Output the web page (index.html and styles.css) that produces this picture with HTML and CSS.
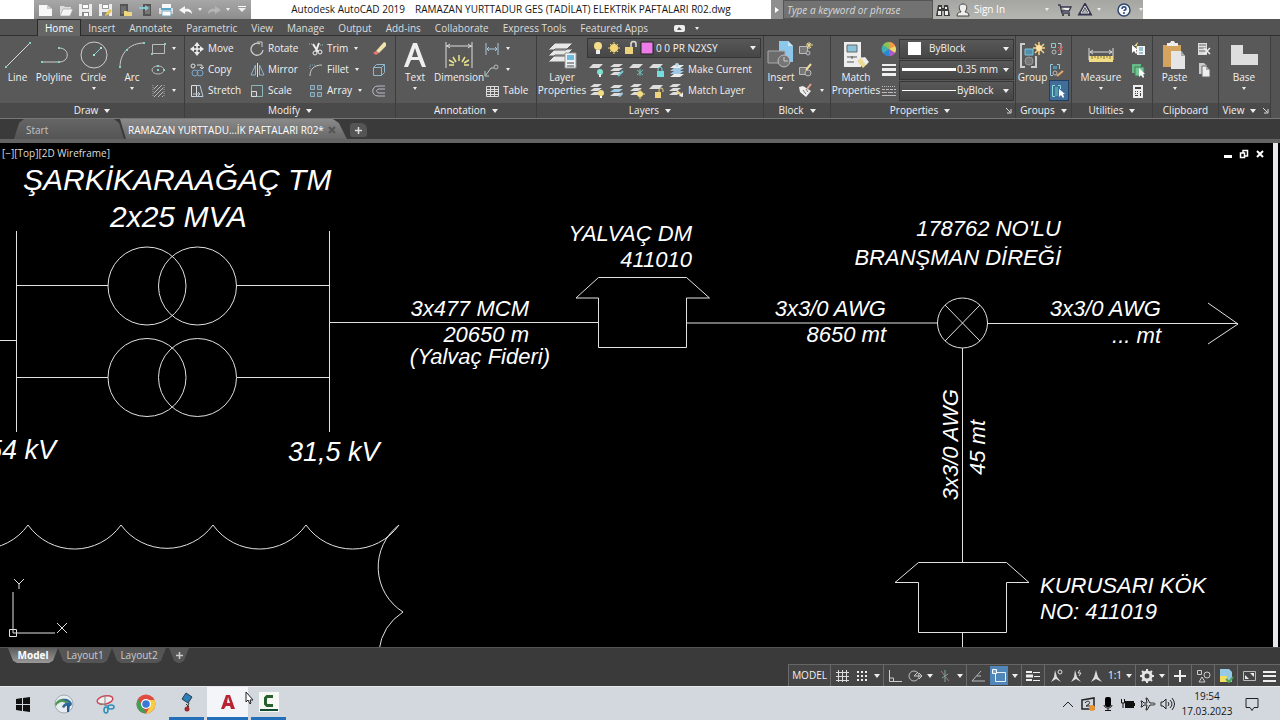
FILE: index.html
```html
<!DOCTYPE html>
<html lang="tr">
<head>
<meta charset="utf-8">
<title>Autodesk AutoCAD 2019</title>
<link rel="stylesheet" href="styles.css">
</head>
<body>
<header class="titlebar">
  <nav class="quick" aria-label="Quick access">
    <button aria-label="New"><svg width="16" height="14"><path d="M1 2h8l5 4v7H1z" fill="#f7f7f7"/><path d="M9 2v4h5" fill="#ccc"/></svg></button>
    <button aria-label="Open"><svg width="16" height="14"><path d="M2 13V3h4l1 1h6v3" fill="#ddd"/><path d="M2 13l3-7h10l-3 7z" fill="#f4f4f4" stroke="#999" stroke-width=".6"/></svg></button>
    <button aria-label="Save"><svg width="16" height="14"><path d="M1 1h13v12H1z" fill="#ececec"/><path d="M4 1h7v5H4z" fill="#999"/><path d="M5 2h5v3H5z" fill="#fff"/><path d="M4 9h7v4H4z" fill="#888"/><path d="M6 10h4v3H6z" fill="#fff"/></svg></button>
    <button aria-label="Save as"><svg width="16" height="14"><path d="M1 1h13v12H1z" fill="#ececec"/><path d="M4 1h7v5H4z" fill="#999"/><path d="M5 2h5v3H5z" fill="#fff"/><path d="M4 9h7v4H4z" fill="#888"/><path d="M7 13l1-3 4-4 2 2-4 4z" fill="#e8c45c"/></svg></button>
    <button aria-label="Open from mobile"><svg width="16" height="14"><path d="M2 1h8v12H2z" fill="#545454"/><path d="M3 3h5v8H3z" fill="#6f6f6f"/><path d="M6 8h3l1 1h4v4H6z" fill="#eed87e"/></svg></button>
    <button aria-label="Save to mobile"><svg width="16" height="14"><path d="M5 1h8v12H5z" fill="#545454"/><path d="M7 3h5v8H7z" fill="#777"/><path d="M1 4h6V2l4 3-4 3V6H1z" fill="#83cad4"/></svg></button>
    <button aria-label="Plot"><svg width="16" height="14"><path d="M4 1h9v4H4z" fill="#f7f7f7"/><path d="M1 5h14v6H1z" fill="#ddd"/><path d="M3 5h10v2H3z" fill="#58a5ca"/><path d="M4 8h9v5H4z" fill="#fff" stroke="#7ba7bd"/></svg></button>
    <button aria-label="Undo"><svg width="16" height="14"><path d="M1 7l6-4v3c5-1 7 2 7 5-2-2-4-3-7-2v2z" fill="#f6f6f6"/></svg></button>
    <i class="caret"></i>
    <button aria-label="Redo"><svg width="16" height="14"><path d="M15 7L9 3v3C4 5 2 8 2 11c2-2 4-3 7-2v2z" fill="#b5b5b5"/></svg></button>
    <i class="caret"></i>
    <button class="quick-more" aria-label="Customize"><i class="caret caret-lined"></i></button>
  </nav>
  <h1 class="doc-title"><span>Autodesk AutoCAD 2019</span><span>RAMAZAN YURTTADUR GES (TADİLAT) ELEKTRİK PAFTALARI R02.dwg</span></h1>
  <div class="info">
    <button class="info-arrow" aria-label="Collapse search"><svg width="6" height="8"><path d="M1 1l4 3-4 3z" fill="#fff"/></svg></button>
    <input class="search" aria-label="Search" placeholder="Type a keyword or phrase">
    <button aria-label="Find"><svg width="16" height="14"><path d="M3 2h4v3h2V2h4l2 11H9V8H7v5H1z" fill="#3c3c3c"/><path d="M4 4h2v2H4zM10 4h2v2h-2zM3 8h3v4H3zM10 8h3v4h-3z" fill="#eee"/></svg></button>
    <button class="sign"><svg width="16" height="14"><path d="M2 13c0-3 2-4 4-4-3-4-2-8 2-8s5 4 2 8c2 0 4 1 4 4z" fill="#eee" stroke="#444"/></svg>Sign In</button>
    <i class="caret caret-far"></i>
    <button aria-label="Store"><svg width="16" height="14"><path d="M1 2h2l2 8h8M4 4h10l-2 4H5" fill="#eee" stroke="#34344c" stroke-width="1.3"/><circle cx="6" cy="12" r="1" fill="#222"/><circle cx="12" cy="12" r="1" fill="#222"/></svg></button>
    <button aria-label="Autodesk"><svg width="16" height="14"><path d="M8 2l5 9H3z" fill="none" stroke="#34344c" stroke-width="3"/><path d="M8 3l4 7H4z" fill="none" stroke="#eee"/></svg></button>
    <i class="caret"></i>
    <button class="help" aria-label="Help"><svg width="16" height="16"><circle cx="8" cy="8" r="6" fill="#f8f8f8" stroke="#31476e" stroke-width="1.5"/><path d="M6 7c0-3 4-3 4 0 0 1-2 1-2 2M8 10v2" fill="none" stroke="#254680" stroke-width="1.5"/></svg></button>
    <i class="caret"></i>
  </div>
  <div class="window-gap"></div>
</header>

<nav class="ribbon-tabs" aria-label="Ribbon tabs">
  <button class="tab tab-on">Home</button><button class="tab">Insert</button><button class="tab">Annotate</button><button class="tab">Parametric</button><button class="tab">View</button><button class="tab">Manage</button><button class="tab">Output</button><button class="tab">Add-ins</button><button class="tab">Collaborate</button><button class="tab">Express Tools</button><button class="tab">Featured Apps</button>
  <button class="tab tab-min" aria-label="Minimize ribbon"><svg width="11" height="7"><rect width="11" height="7" rx="2" fill="#eee"/><path d="M3 5l2-3 3 3z" fill="#555"/></svg><i class="caret"></i></button>
</nav>

<main class="ribbon">
  <section class="panel"><div class="tools draw">
    <button class="big"><svg width="32" height="32"><path d="M4 28L28 4" stroke="#ddd"/><path d="M3 27h2v2H3zM27 3h2v2h-2z" fill="#7fd1c9"/></svg>Line</button>
    <button class="big"><svg width="32" height="32"><path d="M4 23h17c11 0 11-14 0-14" fill="none" stroke="#ccc"/><path d="M3 22h2v2H3zM20 22h2v2h-2zM20 8h2v2h-2z" fill="#7fd1c9"/></svg>Polyline</button>
    <button class="big"><svg width="32" height="32"><circle cx="16" cy="16" r="13" fill="none" stroke="#ccc"/><path d="M16 16l7-7" stroke="#7fd1c9"/><path d="M15 15h2v2h-2zM22 8h2v2h-2z" fill="#9fe9df"/></svg>Circle<i class="caret"></i></button>
    <button class="big"><svg width="32" height="32"><path d="M4 28C4 14 14 4 28 4" fill="none" stroke="#ccc"/><path d="M3 27h2v2H3zM10 10h2v2h-2zM27 3h2v2h-2z" fill="#7fd1c9"/></svg>Arc<i class="caret"></i></button>
    <div class="stack">
      <button class="cmd" aria-label="Rectangle"><svg width="16" height="16"><path d="M2.5 3.500h12v9h-12z" fill="none" stroke="#bbb"/><path d="M1 12h2v2H1zM14 2h2v2h-2z" fill="#8cc"/></svg><i class="caret"></i></button>
      <button class="cmd" aria-label="Ellipse"><svg width="16" height="16"><ellipse cx="8" cy="8" rx="6" ry="4" fill="none" stroke="#bbb"/><path d="M7 7h2v2H7zM13 7h2v2h-2zM7 3h2v2H7z" fill="#8cc"/></svg><i class="caret"></i></button>
      <button class="cmd" aria-label="Hatch"><svg width="16" height="16"><path d="M3 2v12M14 2v12" stroke="#aaa" stroke-dasharray="1 1"/><path d="M4 6l4-4M4 10l8-8M4 14L13 5M8 14l5-5M12 14l1-1" stroke="#bbb"/></svg><i class="caret"></i></button>
    </div>
  </div><button class="panel-title">Draw <i class="caret wide"></i></button></section>

  <section class="panel"><div class="tools modify">
    <div class="stack">
      <button class="cmd"><svg width="16" height="16"><path d="M8 3v10M3 8h10" stroke="#eee" stroke-width="1.5"/><path d="M8 1l3 4H5zM8 15l3-4H5zM1 8l4-3v6zM15 8l-4-3v6z" fill="#eee"/></svg>Move</button>
      <button class="cmd"><svg width="16" height="16"><circle cx="4" cy="4" r="2" fill="none" stroke="#ddd"/><path d="M8 3h5v4M11 5l2 2 2-2" fill="none" stroke="#ddd"/><circle cx="6" cy="11" r="3" fill="none" stroke="#79a9d1"/><circle cx="11" cy="11" r="3" fill="none" stroke="#79a9d1"/></svg>Copy</button>
      <button class="cmd"><svg width="16" height="16"><path d="M2.500 2.500h5v11h-5z" fill="none" stroke="#ddd"/><path d="M7 2.500h4l3 11H5M4 11h6M9 9l2 2-2 2" fill="none" stroke="#bcd"/></svg>Stretch</button>
    </div>
    <div class="stack">
      <button class="cmd"><svg width="16" height="16"><path d="M11 3A6 6 0 1 0 14 9" fill="none" stroke="#ccc" stroke-width="1.3"/><path d="M8 1h5v5" fill="none" stroke="#ccc"/></svg>Rotate</button>
      <button class="cmd"><svg width="16" height="16"><path d="M6.500 3v10H2zM10.500 3v10H15z" fill="none" stroke="#8bb5cf"/><path d="M8.500 1v14" stroke="#ddd"/></svg>Mirror</button>
      <button class="cmd"><svg width="16" height="16"><path d="M2.500 2.500h11v11h-11z" fill="none" stroke="#8ab8b6"/><path d="M2.500 8.500h5v5h-5z" fill="#626565" stroke="#ddd"/></svg>Scale</button>
    </div>
    <div class="stack">
      <button class="cmd"><svg width="16" height="16"><path d="M5 3l5 8M11 2L8 10" stroke="#eee" stroke-width="2"/><circle cx="7" cy="12" r="2" fill="none" stroke="#eee"/><circle cx="12" cy="11" r="2" fill="none" stroke="#eee"/><path d="M1 3h4M12 4h3" stroke="#9bb" stroke-dasharray="1 1"/></svg>Trim<i class="caret push"></i></button>
      <button class="cmd"><svg width="16" height="16"><path d="M2 14C2 7 6 3 14 3" fill="none" stroke="#ccc"/><path d="M2 7V3h5" fill="none" stroke="#7b9eb0" stroke-dasharray="1 1"/></svg>Fillet<i class="caret push"></i></button>
      <button class="cmd"><svg width="16" height="16"><path d="M2.500 2.500h4v4h-4zM9.500 2.500h4v4h-4zM2.500 9.500h4v4h-4zM9.500 9.500h4v4h-4z" fill="#61717b" stroke="#8fb1c3"/></svg>Array<i class="caret push"></i></button>
    </div>
    <div class="stack">
      <button class="cmd" aria-label="Erase"><svg width="16" height="16"><path d="M5 10l8-9 2 1v3l-7 7z" fill="#f1e3ac"/><path d="M2 12l3-2 3 2-3 2z" fill="#ec7678"/></svg></button>
      <button class="cmd" aria-label="Explode"><svg width="16" height="16"><path d="M2.500 5.500h8v8h-8zM2.500 5.500l3-3h8v8l-3 3M10.500 5.500l3-3" fill="none" stroke="#8fb7ce"/></svg></button>
      <button class="cmd" aria-label="Offset"><svg width="16" height="16"><path d="M14 3H7c-7 0-7 10 0 10h7M14 6H8c-3 0-3 4 0 4h6" fill="none" stroke="#bbc"/></svg></button>
    </div>
  </div><button class="panel-title">Modify <i class="caret wide"></i></button></section>

  <section class="panel"><div class="tools annot">
    <button class="big"><svg width="32" height="32"><path d="M5 28L14 4h4l9 24h-4l-3-7h-8l-3 7zM13 18h6l-3-9z" fill="#eee" fill-rule="evenodd"/></svg>Text<i class="caret"></i></button>
    <button class="big"><svg width="32" height="32"><path d="M3 3v26M29 3v26M3 7h26M7 5L4 7l3 2M25 5l3 2-3 2" fill="none" stroke="#ddd"/><path d="M16 16v6M10 18l3 5M22 18l-3 5M6 21l5 3M26 21l-5 3M6 26h5M26 26h-5" stroke="#e8e58e" stroke-width="1.500"/></svg>Dimension</button>
    <div class="stack">
      <button class="cmd" aria-label="Linear"><svg width="16" height="16"><path d="M2 2v12M14 2v12M3 8h10M5 6L3 8l2 2M11 6l2 2-2 2" fill="none" stroke="#a6c8dc"/></svg><i class="caret"></i></button>
      <button class="cmd" aria-label="Leader"><svg width="16" height="16"><circle cx="12" cy="5" r="2" fill="none" stroke="#bbb"/><path d="M10 6H7l-5 7M1 9v5h4" fill="none" stroke="#bcc"/></svg><i class="caret"></i></button>
      <button class="cmd"><svg width="16" height="16"><path d="M2.500 3.500h12v10h-12zM2 6.500h13M2 8.500h13M2 11.500h13M6.500 3v11M10.500 3v11" fill="none" stroke="#ddd"/></svg>Table</button>
    </div>
  </div><button class="panel-title">Annotation <i class="caret wide"></i></button></section>

  <section class="panel"><div class="tools layers">
    <button class="big"><svg width="32" height="32"><path d="M9 4h18l-7 7H2zM9 10h18l-7 7H2zM9 16h18l-7 7H2z" fill="#e7e7e7" stroke="#5b5b5b"/><path d="M19 14h11v15H19z" fill="#edf2f4" stroke="#999"/><path d="M21 16h7v5h-7z" fill="#6dbbe0"/><path d="M21 24h7M21 27h7" stroke="#444"/></svg>Layer<br>Properties</button>
    <div class="stack">
      <div class="combo">
        <svg width="68" height="18"><circle cx="10" cy="7" r="4" fill="#f4de87"/><path d="M8 11h4v4H8z" fill="#eee"/><path d="M26 3v12M20 9h12M22 5l8 8M30 5l-8 8" stroke="#eed176"/><circle cx="26" cy="9" r="4" fill="#f4d677"/><path d="M37 8h8v7h-8z" fill="#ecd27d"/><path d="M43 8V5a2 2 0 0 1 5 0v3" fill="none" stroke="#ddd" stroke-width="1.5"/><path d="M53 3h12v12H53z" fill="#ee7ce8" stroke="#222"/></svg>
        <select aria-label="Layer"><option>0 0 PR N2XSY</option></select><i class="caret wide"></i>
      </div>
      <div class="layer-row">
        <button aria-label="Off"><svg width="16" height="16"><path d="M4 2h10l-4 4H0z" fill="#ddd"/><circle cx="11" cy="10" r="3" fill="#7ee1cf"/><path d="M10 12h2v3h-2z" fill="#eee"/></svg></button>
        <button aria-label="Isolate"><svg width="16" height="16"><path d="M5 2h9l-4 3H1zM5 6h9l-4 3H1zM5 10h9l-4 3H1z" fill="#ddd"/><path d="M9 14l5-5" stroke="#75c6d3" stroke-width="2"/></svg></button>
        <button aria-label="Freeze"><svg width="16" height="16"><path d="M4 2h10l-4 4H0z" fill="#ddd"/><path d="M11 7v7M8 8l6 5M14 8l-6 5" stroke="#6fc6bd"/></svg></button>
        <button aria-label="Lock"><svg width="16" height="16"><path d="M4 2h10l-4 4H0z" fill="#ddd"/><path d="M8 9h7v6H8z" fill="#74dbe0"/><path d="M9 9V7a2 2 0 0 1 4 0v2" fill="none" stroke="#74dbe0"/></svg></button>
        <button class="named"><svg width="16" height="16"><path d="M5 6h10l-4 3H1zM5 9h10l-4 3H1z" fill="#9fc9e2"/><path d="M5 3h10l-4 3H1zM5 12h10l-4 3H1z" fill="#eee"/><circle cx="8" cy="3" r="2" fill="#b9dcee"/></svg>Make Current</button>
      </div>
      <div class="layer-row">
        <button aria-label="On"><svg width="16" height="16"><path d="M5 1h8L9 4H1zM5 5h8L9 8H1zM5 9h8l-4 3H1z" fill="#ddd"/><circle cx="12" cy="10" r="3" fill="#f1dd83"/><path d="M11 13h2v2h-2z" fill="#fff"/></svg></button>
        <button aria-label="Unisolate"><svg width="16" height="16"><path d="M5 2h9l-4 3H1zM5 10h9l-4 3H1z" fill="#ddd"/><path d="M5 6h9l-4 3H1zM9 13l4-4 1 2-3 3z" fill="#9fc9e2"/></svg></button>
        <button aria-label="Thaw"><svg width="16" height="16"><path d="M5 1h8L9 4H1zM5 5h8L9 8H1zM5 9h8l-4 3H1z" fill="#ddd"/><circle cx="11" cy="11" r="3" fill="#f1dd83"/><path d="M11 6v10M6 11h10" stroke="#f1dd83"/></svg></button>
        <button aria-label="Unlock"><svg width="16" height="16"><path d="M4 2h10l-4 4H0z" fill="#ddd"/><path d="M6 9h6v6H6z" fill="#eed47c"/><path d="M10 9V7a2 2 0 0 1 4 0v2" fill="none" stroke="#eed47c"/></svg></button>
        <button class="named"><svg width="16" height="16"><path d="M4 1h8L8 4H0zM4 5h8L8 8H0zM4 9h8l-4 3H0z" fill="#ddd"/><path d="M8 8l5 5" stroke="#eed47c" stroke-width="2"/><path d="M10 13l4-4v5z" fill="#eee"/></svg>Match Layer</button>
      </div>
    </div>
  </div><button class="panel-title">Layers <i class="caret wide"></i></button></section>

  <section class="panel"><div class="tools block">
    <button class="big"><svg width="32" height="32"><path d="M14 2h9l5 5v16H14z" fill="#8cc8eb"/><path d="M23 2v5h5" fill="#c8e5f5"/><path d="M3 12h17v12H3z" fill="#6c6c6c" stroke="#aaa"/><circle cx="19" cy="22" r="6" fill="#777" stroke="#bbb"/><path d="M19 18v4h4" fill="none" stroke="#ccc"/></svg>Insert<i class="caret"></i></button>
    <div class="stack">
      <button class="cmd" aria-label="Create"><svg width="16" height="16"><path d="M1.500 5.500h8v7h-8z" fill="#777" stroke="#bbb"/><circle cx="10" cy="12" r="2" fill="#666" stroke="#bbb"/><path d="M11 1v7M8 4h7M9 2l4 5M13 2L9 7" stroke="#f0de93"/></svg></button>
      <button class="cmd" aria-label="Edit block"><svg width="16" height="16"><path d="M1.500 5.500h8v7h-8z" fill="#777" stroke="#bbb"/><circle cx="10" cy="11" r="3" fill="#666" stroke="#bbb"/><path d="M8 8l5-6" stroke="#eedc9b" stroke-width="2"/></svg></button>
      <button class="cmd" aria-label="Attributes"><svg width="16" height="16"><path d="M1 4l4-1 8 5-5 6-6-5z" fill="#eee"/><path d="M5 7l3 4M8 6l2 3" stroke="#777"/><path d="M9 6l4-5" stroke="#eaa38c" stroke-width="2"/></svg><i class="caret"></i></button>
    </div>
  </div><button class="panel-title">Block <i class="caret wide"></i></button></section>

  <section class="panel"><div class="tools props">
    <button class="big"><svg width="32" height="32"><path d="M4 3h17v25H4z" fill="#eee"/><path d="M7 6h10v7H7z" fill="#8bc3d9" stroke="#666"/><path d="M7 18h10M7 23h7M12 17v3" stroke="#555"/><path d="M17 22l5-4 5 7-4 4z" fill="#eddb94"/><path d="M21 19l4-1 4 5-3 3z" fill="#eee"/></svg>Match<br>Properties</button>
    <div class="stack">
      <label class="prop" for="color"><svg width="16" height="16"><circle cx="8" cy="8" r="7" fill="#e76758"/><path d="M8 8V1a7 7 0 0 1 6 4z" fill="#f29a45"/><path d="M8 8l6-3a7 7 0 0 1 0 7z" fill="#eddb6d"/><path d="M8 8l6 4a7 7 0 0 1-6 3z" fill="#a95bd0"/><path d="M8 8v7a7 7 0 0 1-6-3z" fill="#2687db"/><path d="M8 8L2 12a7 7 0 0 1 0-8z" fill="#3cb2b6"/><path d="M8 8L2 4a7 7 0 0 1 6-3z" fill="#85c556"/></svg><span class="combo"><b class="swatch"></b><select id="color"><option>ByBlock</option></select><i class="caret wide"></i></span></label>
      <label class="prop" for="weight"><svg width="16" height="16"><path d="M1 3h14" stroke="#eee" stroke-width="2"/><path d="M1 7.500h14M1 12.500h14" stroke="#eee" stroke-width="3"/></svg><span class="combo"><b class="sample thick"></b><select id="weight"><option>0.35 mm</option></select><i class="caret wide"></i></span></label>
      <label class="prop" for="type"><svg width="16" height="16"><path d="M1 3.500h14" stroke="#bbb" stroke-dasharray="1 1"/><path d="M1 6.500h14" stroke="#bbb" stroke-dasharray="3 1"/><path d="M1 9.500h14" stroke="#bbb" stroke-dasharray="5 1"/><path d="M1 12.500h14" stroke="#bbb"/></svg><span class="combo"><b class="sample"></b><select id="type"><option>ByBlock</option></select><i class="caret wide"></i></span></label>
    </div>
  </div><button class="panel-title">Properties <i class="caret wide"></i><svg class="launch" width="7" height="7"><path d="M1 1l4 4M6 2v4H2" fill="none" stroke="#ddd"/></svg></button></section>

  <section class="panel"><div class="tools groups">
    <button class="big"><svg width="32" height="32"><path d="M8 5H4v23h4M14 28h5V17" fill="none" stroke="#ccc" stroke-width="2"/><path d="M8 10h8v6H8z" fill="#548faa" stroke="#7cc3dd"/><circle cx="12" cy="22" r="4" fill="#777" stroke="#999"/><path d="M22 3v13M16 9h12M18 5l9 9M27 5l-9 9" stroke="#f6d082" stroke-width="1.5"/><circle cx="22" cy="9" r="3" fill="#ffe1a2"/></svg>Group</button>
    <div class="stack">
      <button class="cmd" aria-label="Ungroup"><svg width="16" height="16"><path d="M2.500 2.500h4v4h-4z" fill="none" stroke="#8cc"/><circle cx="5" cy="11" r="2" fill="none" stroke="#bbb"/><path d="M9 2.500h3v11H9" fill="none" stroke="#ccc"/><path d="M9 6l5 4M14 6l-5 4" stroke="#d55"/></svg></button>
      <button class="cmd" aria-label="Group edit"><svg width="16" height="16"><path d="M4 2.500H1.500v11H4M8 2.500h2.500V7" fill="none" stroke="#9cc6dd"/><path d="M4 4h4v3H4z" fill="#4994b3"/><circle cx="6" cy="11" r="2" fill="none" stroke="#bbb"/><path d="M8 14l6-5" stroke="#e5a66e" stroke-width="2"/></svg></button>
      <button class="cmd pressed" aria-label="Group selection" aria-pressed="true"><svg width="16" height="16"><path d="M5 2.500H2.500v11H5M8 2.500h2.500V6" fill="none" stroke="#8dd"/><path d="M5 4h3v9H5z" fill="#559ea8"/><path d="M9 6v8l2-2 2 3 1-1-1-3h2z" fill="#fff"/></svg></button>
    </div>
  </div><button class="panel-title">Groups <i class="caret wide"></i></button></section>

  <section class="panel"><div class="tools utils">
    <button class="big"><svg width="32" height="32"><path d="M4 9v12M28 9v12M5 13h22M8 11l-3 2 3 2M24 11l3 2-3 2" fill="none" stroke="#ddd"/><path d="M4 17h24v6H4z" fill="#f1dd83"/><path d="M7 17v3M10 17v2M13 17v3M16 17v2M19 17v3M22 17v2M25 17v3" stroke="#8a7430"/></svg>Measure<i class="caret"></i></button>
    <div class="stack">
      <button class="cmd" aria-label="Quick select"><svg width="16" height="16"><path d="M7 5h8v9H7z" fill="#f4f4f4"/><path d="M9 7h4M9 9h4M9 12h4" stroke="#438dae"/><path d="M2 4v8l2-2 2 3 1-1-1-3h2z" fill="#fff"/><path d="M8 1L4 5h4L6 8" fill="#eee18b"/></svg></button>
      <button class="cmd" aria-label="Select all"><svg width="16" height="16"><path d="M2 2h9v9H2z" fill="#65b985"/><path d="M5 5h9v9H5z" fill="#75c594" stroke="#4a765a"/><path d="M9 6v9l2-2 2 3 1-1-1-3h2z" fill="#fff"/></svg></button>
      <button class="cmd" aria-label="Calculator"><svg width="16" height="16"><path d="M3 2h10v13H3z" fill="#eee"/><path d="M5 4h6v2H5zM5 8h1v1H5zM7 8h1v1H7zM10 8h1v1h-1zM5 10h1v1H5zM7 10h1v1H7zM10 10h1v3h-1zM5 12h3v1H5z" fill="#444"/></svg></button>
    </div>
  </div><button class="panel-title">Utilities <i class="caret wide"></i></button></section>

  <section class="panel"><div class="tools clip">
    <button class="big"><svg width="32" height="32"><path d="M4 6h18v22H4z" fill="#d4a45e"/><path d="M8 7V4h3l1-2h3l1 2h3v3z" fill="#eee"/><path d="M12 12h10l4 5v13H12z" fill="#e5e5e5"/><path d="M22 12v5h4" fill="#aaa"/></svg>Paste<i class="caret"></i></button>
    <div class="stack">
      <button class="cmd" aria-label="Cut"><svg width="16" height="16"><path d="M2 2h9v12H2z" fill="#ddd"/><path d="M3 4h7M3 7h7M3 10h7" stroke="#666"/><path d="M8 7l6 6M14 7l-6 6" stroke="#eee" stroke-width="1.5"/></svg></button>
      <button class="cmd" aria-label="Copy clip"><svg width="16" height="16"><path d="M3 1h5l3 3v8H3z" fill="#ccc"/><path d="M6 4h4l4 4v7H6z" fill="#eee" stroke="#666"/><path d="M10 4v4h4" fill="#aaa"/></svg></button>
    </div>
  </div><button class="panel-title">Clipboard</button></section>

  <section class="panel"><div class="tools base">
    <button class="big"><svg width="32" height="32"><path d="M3 6h12v9h15v11H3z" fill="#dedede"/></svg>Base<i class="caret"></i></button>
  </div><button class="panel-title">View <i class="caret wide"></i><svg class="launch" width="7" height="7"><path d="M1 1l4 4M6 2v4H2" fill="none" stroke="#ddd"/></svg></button></section>
</main>

<nav class="file-tabs" aria-label="Drawings">
  <button class="file file-start">Start</button>
  <button class="file file-on">RAMAZAN YURTTADU...İK PAFTALARI R02*<svg width="8" height="8"><path d="M1 1l6 6M7 1L1 7" stroke="#555" stroke-width="2"/></svg></button>
  <button class="file-add" aria-label="New drawing"><svg width="9" height="9"><path d="M4.500 1v7M1 4.500h7" stroke="#ddd" stroke-width="1.5"/></svg></button>
</nav>

<section class="viewport">
  <svg class="drawing" viewBox="0 143 1280 504" preserveAspectRatio="xMinYMin slice" role="img" aria-label="Single line diagram">
    <g class="lines">
      <path d="M0 340.5H17M16.5 231V432M329.500 231V432M17 285.500H108M237 285.500H330M17 377.500H108M237 377.500H330"/>
      <circle cx="147" cy="286" r="39"/><circle cx="197.500" cy="286" r="39"/>
      <circle cx="147" cy="377.500" r="39"/><circle cx="197.500" cy="377.500" r="39"/>
      <path d="M330 322.500H598M687 323H938M987 323.500H1238M1208 303l30 21-30 20"/>
      <path d="M598.500 298H576L598.500 277.500H686.500L709.500 298H686.500V347.500H598.500Z"/>
      <circle cx="962.500" cy="323" r="25"/><path d="M945 305l35 36M980 305l-35 36M962.500 348V562M962.500 632V647"/>
      <path d="M918.500 582.500H895L918.500 562.500H1006.500L1029 582.500H1006.500V632.500H918.500Z"/>
      <path d="M-65 525A57 57 0 0 0 28 525A57 57 0 0 0 121 525A57 57 0 0 0 213 525A57 57 0 0 0 306 525A57 57 0 0 0 399 525A53 53 0 0 0 403 612A54 54 0 0 0 379 650"/>
      <path class="ucs" d="M13 592V633M13 633H55M9.500 629.500h7v7h-7zM14 579l5 5 5-5M19 584v5M57 623l10 10M67 623l-10 10"/>
    </g>
    <g class="cad-text large">
      <text x="23" y="190">ŞARKİKARAAĞAÇ TM</text>
      <text x="110" y="227">2x25 MVA</text>
    </g>
    <g class="cad-text medium">
      <text x="56" y="459" text-anchor="end">154 kV</text>
      <text x="288" y="461">31,5 kV</text>
    </g>
    <g class="cad-text" text-anchor="end">
      <text x="692" y="241">YALVAÇ DM</text><text x="692" y="267">411010</text>
      <text x="529" y="316">3x477 MCM</text><text x="529" y="342">20650 m</text><text x="550" y="364">(Yalvaç Fideri)</text>
      <text x="886" y="316">3x3/0 AWG</text><text x="886" y="342">8650 mt</text>
      <text x="1061" y="236">178762 NO'LU</text><text x="1061" y="265">BRANŞMAN DİREĞİ</text>
      <text x="1161" y="316">3x3/0 AWG</text><text x="1161" y="343">... mt</text>
      <text transform="translate(958 389) rotate(-90)">3x3/0 AWG</text>
      <text transform="translate(985 420) rotate(-90)">45 mt</text>
    </g>
    <g class="cad-text"><text x="1040" y="593">KURUSARI KÖK</text><text x="1040" y="619">NO: 411019</text></g>
  </svg>
  <div class="view-label"><button>[−]</button><button>[Top]</button><button>[2D Wireframe]</button></div>
  <div class="view-controls">
    <button aria-label="Minimize"><svg width="10" height="10"><path d="M1 7.500h8" stroke="#fff" stroke-width="3"/></svg></button>
    <button aria-label="Restore"><svg width="10" height="10"><path d="M1.500 4h4v4.500h-4zM4 3.500V1.500h4.500V7H6" fill="none" stroke="#fff" stroke-width="1.500"/></svg></button>
    <button aria-label="Close"><svg width="10" height="10"><path d="M2 2l6 6M8 2L2 8" stroke="#fff" stroke-width="2"/></svg></button>
  </div>
  <div class="scroll-edge"></div>
</section>

<footer class="bottom">
  <nav class="layouts" aria-label="Layouts"><button class="lay lay-on">Model</button><button class="lay">Layout1</button><button class="lay">Layout2</button><button class="lay lay-add" aria-label="New layout"><svg width="9" height="9"><path d="M4.500 1v7M1 4.500h7" stroke="#ccc" stroke-width="1.500"/></svg></button></nav>
  <div class="status">
    <div class="sg"><button class="model">MODEL</button></div>
    <div class="sg"><button aria-label="Grid"><svg width="16" height="16"><path d="M4.500 2v12M8.500 2v12M12.500 2v12M2 4.500h13M2 8.500h13M2 12.500h13" stroke="#ddd"/></svg></button><button aria-label="Snap"><svg width="16" height="16"><path d="M3 4h11M3 8h11M3 12h11" stroke="#eee" stroke-width="2" stroke-dasharray="2 2"/></svg></button><i class="caret wide"></i></div>
    <div class="sg"><button aria-label="Ortho"><svg width="16" height="16"><path d="M2.500 2v11.500H15M2.500 10h4v4" fill="none" stroke="#ccc"/></svg></button><button aria-label="Polar"><svg width="16" height="16"><circle cx="7" cy="8" r="5" fill="none" stroke="#bbb"/><path d="M7 8h8M7 8l4-4M12 5l3 3-3 3" fill="none" stroke="#ccc"/></svg></button><i class="caret wide"></i><button aria-label="Isodraft"><svg width="16" height="16"><path d="M8 2v12" stroke="#7aa"/><path d="M4 3l8 10" stroke="#a77"/><path d="M11 6l-6 4" stroke="#7a9"/></svg></button><i class="caret wide"></i></div>
    <div class="sg"><button aria-label="Tracking"><svg width="16" height="16"><path d="M2 13h13M2 13l9-10M7 8h4" stroke="#bbb"/></svg></button><button class="snap" aria-label="Object snap"><svg width="16" height="16"><path d="M4.500 4.500h10v9h-10z" fill="none" stroke="#eee"/><path d="M1.500 1.500h4v4h-4z" fill="#6ba4da" stroke="#fff"/></svg></button><i class="caret wide"></i></div>
    <div class="sg"><button aria-label="Lineweight"><svg width="16" height="16"><path d="M1 4h6M1 12h6" stroke="#eee" stroke-width="2"/><path d="M1 8h7" stroke="#eee" stroke-width="3"/><path d="M8 4.500h7M9 8.500h6M8 12.500h7" stroke="#eee"/></svg></button></div>
    <div class="sg"><button aria-label="Annotation visibility"><svg width="16" height="16"><path d="M7 2l2 7 4 5-5-3-5 3 3-5z" fill="#ddd"/><circle cx="12" cy="4" r="2" fill="none" stroke="#ddd"/></svg></button><button aria-label="Autoscale"><svg width="16" height="16"><path d="M7 2l2 7 4 5-5-3-5 3 3-5z" fill="#ddd"/><path d="M12 2l-2 3h3l-2 3" fill="none" stroke="#ddd"/></svg></button><button aria-label="Annotation scale"><svg width="16" height="16"><path d="M8 2l2 7 4 5-6-3-5 3 3-5z" fill="#ddd"/></svg></button><button>1:1</button><i class="caret wide"></i></div>
    <div class="sg"><button aria-label="Settings"><svg width="16" height="16"><circle cx="8" cy="8" r="4" fill="none" stroke="#e4e4e4" stroke-width="3"/><path d="M8 1v3M8 12v3M1 8h3M12 8h3M3 3l2 2M11 11l2 2M3 13l2-2M11 5l2-2" stroke="#e4e4e4" stroke-width="2"/></svg></button><i class="caret wide"></i></div>
    <div class="sg"><button aria-label="Monitor"><svg width="16" height="16"><path d="M8 2v12M2 8h12" stroke="#eee" stroke-width="2"/></svg></button></div>
    <div class="sg"><button aria-label="Isolate objects"><svg width="16" height="16"><path d="M2.500 2.500h4v4h-4zM7 9l3 5H4z" fill="none" stroke="#ccc"/><circle cx="12" cy="7" r="3" fill="none" stroke="#ccc"/></svg></button></div>
    <div class="sg"><button aria-label="Graphics"><svg width="16" height="16"><path d="M2 1h9l3 3v10H2z" fill="#95c9e4"/><path d="M2 8h7v6H2z" fill="#f1de62"/><path d="M8 11l3 3 4-5" fill="none" stroke="#4fa456" stroke-width="2"/></svg></button></div>
    <div class="sg"><button aria-label="Full screen"><svg width="16" height="16"><path d="M2.500 3.500h12v9h-12z" fill="none" stroke="#bbb"/><path d="M9 5h4v4zM4 7v4h4z" fill="#eee"/></svg></button><button aria-label="Customize status"><svg width="16" height="16"><path d="M2 4h13M2 8h13M2 13h13" stroke="#eee" stroke-width="2"/></svg></button></div>
  </div>
</footer>

<footer class="taskbar">
  <nav class="apps" aria-label="Taskbar">
    <button aria-label="Start menu"><svg width="20" height="20"><path d="M3 5l6-1v6H3zM10 4l7-1v7h-7zM3 11h6v6l-6-1zM10 11h7v7l-7-1z" fill="#111"/></svg></button>
    <button aria-label="Browser"><svg width="20" height="20"><circle cx="10" cy="10" r="9" fill="#e8ecef" stroke="#9cabb4"/><path d="M1 10c4-7 10-6 14 0-3 0-4-2-7-2-2 0-4 1-6 4z" fill="#4c9855"/><path d="M7 5c6-1 10 1 11 5l-1 2c-3-1-5-1-7 2l-2-1c1-3 4-5 7-4-2-2-5-3-8-4z" fill="#2e6a97"/><path d="M13 11h3l-1 7h-2z" fill="#2b5791"/></svg></button>
    <button aria-label="Snipping tool"><svg width="20" height="20"><ellipse cx="10" cy="6" rx="8" ry="4" transform="rotate(-12 10 6)" fill="#eee" stroke="#c84c59" stroke-width="1.500"/><path d="M10 2v10M4 9l9 3" stroke="#888"/><ellipse cx="11" cy="16" rx="2" ry="3" fill="none" stroke="#298fb8" stroke-width="1.500"/><ellipse cx="16" cy="13" rx="3" ry="2" fill="none" stroke="#298fb8" stroke-width="1.500"/></svg></button>
    <button aria-label="Chrome"><svg width="20" height="20"><circle cx="10" cy="10" r="9.500" fill="#e04a3f"/><path d="M2 5l5 8 3 6.500A9.500 9.500 0 0 1 2 5z" fill="#3fa158"/><path d="M10 6h8.500A9.500 9.500 0 0 1 10 19.500l4-7z" fill="#f6ce45"/><circle cx="10" cy="10" r="5" fill="#fff"/><circle cx="10" cy="10" r="3.800" fill="#3c78d8"/></svg></button>
    <button class="open" aria-label="Viewer"><svg width="20" height="20"><path d="M9 1l6 4-4 6-6-4z" fill="#2d7fb8" stroke="#26394b"/><path d="M9 12l3 3M12 11l-2 5" stroke="#333"/><circle cx="10" cy="17" r="2.500" fill="#a12a2c"/></svg></button>
    <button class="open front" aria-label="AutoCAD"><svg width="20" height="20"><path d="M3 17L8 3h4l5 14h-4l-1-3H8l-2 3zM9 11h3l-2-6z" fill="#b92433" fill-rule="evenodd"/></svg></button>
    <button class="open" aria-label="Camtasia"><svg width="20" height="20"><path d="M0 0h20v20H0z" fill="#f8f8f5"/><path d="M14 4.500H8L6.500 6v6L8 13.500h6" fill="none" stroke="#27602c" stroke-width="3"/><path d="M1 18h18" stroke="#124d30" stroke-width="2"/></svg></button>
  </nav>
  <div class="tray">
    <button aria-label="Hidden icons"><svg width="16" height="16"><path d="M3 11l5-5 5 5" fill="none" stroke="#222"/></svg></button>
    <button aria-label="Sync"><svg width="16" height="16"><path d="M2 4l12-2v11H2z" fill="none" stroke="#222" stroke-width="1.500"/><path d="M5 7c2-3 6-2 4 1l-3 2h4" fill="none" stroke="#222"/><circle cx="12" cy="12" r="3" fill="#e99431"/></svg></button>
    <button aria-label="Microphone"><svg width="16" height="16"><rect x="5" y="1" width="6" height="10" rx="2"/><path d="M4 9c0 4 8 4 8 0M8 12v3M5 14.500h6" fill="none" stroke="#111"/></svg></button>
    <button aria-label="Battery"><svg width="16" height="16"><path d="M5 5h9v7H5zM14 7h1v3h-1z" fill="#111"/><path d="M1.500 3v4h3V3M3 7v5" fill="none" stroke="#111"/></svg></button>
    <button aria-label="Airplane mode"><svg width="16" height="16"><path d="M15 8c0-1-1-1-5-1L7 2H6l1 5H4L2 5H1l1 3-1 3h1l2-2h3l-1 5h1l3-5c4 0 5 0 5-1z" fill="none" stroke="#222"/></svg></button>
    <button aria-label="Volume"><svg width="16" height="16"><path d="M1 6h2l3-3v10l-3-3H1zM8 6q2 2 0 4M10 4q4 4 0 8M12 2q5 6 0 12" fill="none" stroke="#222"/></svg></button>
    <time class="clock">19:54<br>17.03.2023</time>
    <button class="notify" aria-label="Notifications"><svg width="16" height="16"><path d="M2 2.500h12v9h-4l-2 3-2-3H2z" fill="none" stroke="#222"/></svg></button>
  </div>
</footer>
<svg class="pointer" width="10" height="14"><path d="M1 1v10l2-2 2 4 1-1-1-3h3z" fill="#fff" stroke="#222"/></svg>
</body>
</html>
```
FILE: styles.css
```css
* { box-sizing: border-box; }
body { margin: 0; min-height: 100vh; display: flex; flex-direction: column; background: #3a3a3a; color: #f2f2f2; font: 10px/13px "Open Sans", "Noto Sans", sans-serif; overflow: hidden; }
button, select, input { margin: 0; padding: 0; border: 0; background: none; color: inherit; font: inherit; }
button { display: flex; align-items: center; justify-content: center; white-space: nowrap; }
svg { flex: none; display: block; }
.caret { flex: none; width: 0; height: 0; border: 2px solid transparent; border-top: 3px solid #eee; border-bottom: 0; }
.caret.wide { border-width: 3px 3px 0; border-top-width: 4px; }

.titlebar { display: flex; height: 19px; background: #fff; }
.quick { display: flex; align-items: center; gap: 4px; width: 217px; margin-left: 34px; padding-left: 4px; background: linear-gradient(#a7a7a7, #8d8d8d); }
.quick-more { width: 16px; }
.caret-lined { position: relative; border-width: 4px 4px 0; }
.caret-lined::before { content: ""; position: absolute; left: -4px; top: -6px; width: 8px; height: 1px; background: #fff; }
.doc-title { flex: 1; display: flex; gap: 10px; align-items: center; justify-content: center; margin: 0; color: #151515; font-size: 10px; font-weight: 400; white-space: pre; }
.info { display: flex; align-items: center; width: 372px; background: linear-gradient(#a5a6a1, #b5b6b1); }
.info > button { width: 20px; }
.info > .info-arrow { width: 12px; height: 19px; background: #8f8f8f; }
.info > .sign { width: auto; gap: 3px; margin-left: 2px; color: #fff; }
.info > .help { width: 22px; margin-left: 12px; margin-right: 2px; }
.info > .caret { margin-left: 2px; }
.info > .caret-far { margin-left: 40px; margin-right: 6px; }
.search { width: 150px; height: 19px; padding: 0 3px; border: 1px solid #555; background: #727272; font-style: italic; }
.search::placeholder { color: #d8d8d8; opacity: 1; }
.window-gap { width: 137px; }

.ribbon-tabs { display: flex; height: 17px; padding-left: 37px; background: #535353; border-bottom: 1px solid #303030; color: #ddd; }
.tab { padding: 2px 7px 0; }
.tab-on { height: 17px; background: #666; border: 1px solid #292929; border-bottom: 0; padding-top: 1px; color: #fff; }
.tab-min { gap: 10px; margin-left: 12px; }

.ribbon { display: grid; grid-template-columns: 185fr 211fr 141fr 227fr 67fr 185fr 56fr 81fr 66fr 52fr 9fr; height: 82px; background: #535353; }
.panel { display: flex; flex-direction: column; min-width: 0; border-right: 1px solid #3d3d3d; background: #595959; }
.tools { display: grid; height: 67px; padding-top: 2px; }
.panel-title { display: flex; gap: 6px; height: 15px; background: #4a4a4a; }
.launch { margin-left: auto; margin-right: 3px; }
.panel-title:has(.launch)::before { content: ""; width: 4px; margin-right: auto; }
.big { flex-direction: column; justify-content: flex-start; height: 65px; padding-top: 1px; }
.big .caret { margin-top: 3px; }
.stack { display: grid; grid-template-rows: 21px 21px 21px; min-width: 0; }
.cmd { justify-content: flex-start; gap: 3px; }
.cmd > svg + .caret { margin-left: 3px; }
.push { margin-left: 6px; }
.draw { grid-template-columns: 35px 38px 41px 36px 34px; }
.modify { grid-template-columns: 60px 59px 63px 20px; padding-left: 4px; }
.annot { grid-template-columns: 38px 50px 50px; }
.layers { grid-template-columns: 50px 1fr; }
.block { grid-template-columns: 34px 1fr; }
.props { grid-template-columns: 50px 1fr; }
.groups { grid-template-columns: 33px 20px; }
.utils { grid-template-columns: 58px 20px; }
.clip { grid-template-columns: 43px 20px; }
.base { grid-template-columns: 50px; }
.combo { display: flex; align-items: center; min-width: 0; height: 20px; padding-right: 4px; border: 1px solid #363636; background: linear-gradient(#585858, #464646); }
.combo select { flex: 1; min-width: 0; appearance: none; }
.layers .combo { margin-right: 2px; }
.layer-row { display: flex; gap: 4px; padding-left: 2px; }
.named { gap: 3px; }
.prop { display: flex; align-items: center; gap: 2px; }
.prop .combo { flex: 1; margin-right: 1px; }
.swatch { width: 13px; height: 13px; margin: 0 8px; background: #fff; }
.sample { width: 54px; height: 1px; margin: 0 1px 0 2px; background: #fff; }
.thick { height: 3px; }
.pressed { border: 1px solid #1d4063; background: #426d99; width: 20px; }

.file-tabs { display: flex; align-items: flex-end; height: 25px; padding: 0 0 4px 14px; background: linear-gradient(#777 0 1px, #3a3a3a 1px 21px, #636363 21px); }
.file { height: 20px; padding-top: 2px; background: linear-gradient(#656565, #555); color: #c3c3c3; }
.file-start { justify-content: flex-start; width: 110px; padding-left: 12px; clip-path: polygon(0 100%, 5px 4px, 10px 0, 100px 0, 105px 4px, 100% 100%); }
.file-on { gap: 4px; padding-left: 8px; padding-right: 11px; margin-left: -4px; background: linear-gradient(#8a8a8a, #686868); color: #fff; clip-path: polygon(0 0, calc(100% - 14px) 0, calc(100% - 8px) 4px, 100% 100%, 6px 100%); }
.file-add { width: 17px; height: 14px; margin: 0 3px 2px; background: #555; border-radius: 3px 6px 3px 3px; }

.viewport { position: relative; flex: 1; min-height: 0; display: flex; justify-content: flex-end; background: #000; }
.drawing { position: absolute; inset: 0; width: 100%; height: 100%; }
.lines { fill: none; stroke: #e2e2e2; stroke-width: 1; }
.cad-text { fill: #fff; font: italic 22px "Liberation Sans", sans-serif; }
.large { font-size: 30px; }
.medium { font-size: 27px; }
.view-label { position: absolute; left: 2px; top: 4px; display: flex; color: #ddd; }
.view-controls { position: absolute; right: 15px; top: 6px; display: flex; gap: 6px; }
.scroll-edge { position: relative; width: 5px; margin-right: 2px; background: #e6e6ec; }

.bottom { background: #3a3a3a; }
.layouts { display: flex; height: 17px; padding-left: 8px; border-top: 1px solid #555; }
.lay { min-width: 54px; height: 15px; background: #555; color: #ccc; clip-path: polygon(0 0, 100% 0, calc(100% - 5px) 85%, calc(100% - 9px) 100%, 9px 100%, 5px 85%); }
.lay-on { width: 50px; min-width: 0; background: linear-gradient(#5c5c5c, #999); color: #fff; font-weight: 700; }
.lay-add { width: 20px; min-width: 0; margin-left: 3px; }
.status { display: flex; justify-content: flex-end; width: max-content; height: 22px; margin-left: auto; background: #454545; border-top: 1px solid #666; }
.sg { display: flex; align-items: center; gap: 4px; padding: 0 3px; border-left: 1px solid #6a6a6a; }
.snap { width: 18px; height: 19px; background: #5186b8; }

.taskbar { display: flex; justify-content: space-between; height: 34px; background: #d3d8df; border-top: 1px solid #e9e9ed; color: #151515; }
.apps { display: grid; grid-template-columns: repeat(7, 41px); padding-left: 2px; }
.open { margin: 0 3px; border-bottom: 3px solid #246fba; }
.front { margin: 0; background: #f3f5f9; }
.tray { display: flex; align-items: center; gap: 4px; padding-right: 20px; }
.clock { width: 54px; line-height: 15px; text-align: center; }
.notify { margin-left: 6px; }
.pointer { position: absolute; left: 245px; top: 691px; }
```
